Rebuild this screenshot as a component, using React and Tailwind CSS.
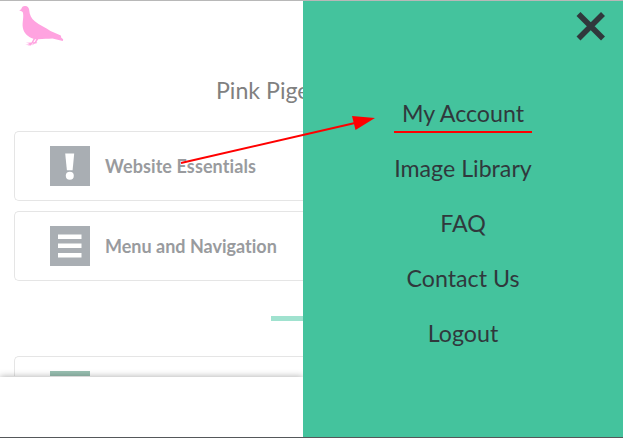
const links = ['My Account', 'Image Library', 'FAQ', 'Contact Us', 'Logout'];

function Pigeon() {
  return (
    <svg className="ml-[19px] mt-[4px] block h-[42px] w-[46px]" viewBox="19 5 46 42" fill="#ffa3e0">
      <path d="M19.2 10.6 L21.2 9.3 C21.6 7 23.3 5.8 25.2 6 C27.7 6.1 29 7.8 29.2 10 C29.5 14.5 31.2 18.4 34.8 21.2 C39.5 25 45.5 27.5 50.5 31 L60.8 35.6 L61.3 37.7 L63.2 39.2 L62.8 41 L52.5 38.6 C48 38.7 43.5 39.2 38.2 39.3 L36.3 42.3 L37.5 43.1 L34.4 43.7 L31.8 45.6 L33.4 43.3 L30.3 43 L34.7 42 L36.3 39.3 L35 39.2 L32.5 43.5 L30.8 45.5 L27.3 45.2 L29.8 44.6 L25.3 44.5 L29.7 43.5 L25.8 42.8 L31.5 42.4 L33.5 38.8 C27.5 36.6 23.8 33 22.9 28 C21.9 22.5 24.3 17 22.7 12.1 L21 11 Z" />
    </svg>
  );
}

function Card({ icon, label, labelClass = '' }) {
  return (
    <div className="flex h-[70px] shrink-0 items-center rounded-l-[5px] border border-r-0 border-[#e5e5e5] pl-[35px]">
      <div className="size-[40px] shrink-0 bg-[#a9aeb3]">{icon}</div>
      <span className={`ml-[15px] whitespace-nowrap text-[18px] font-bold leading-[24px] text-[#999b9e] ${labelClass}`}>{label}</span>
    </div>
  );
}

export default function App() {
  return (
    <div className="relative flex h-[438px] w-[623px] overflow-hidden border-b border-t border-b-[#55585a] border-t-[#b8b8b8] bg-white font-[Lato,sans-serif] [font-variant-ligatures:none]">
      <main className="flex w-[303px] shrink-0 flex-col">
        <div className="h-[375px] shrink-0 overflow-hidden">
          <div className="h-[66px]">
            <Pigeon />
          </div>
          <h1 className="h-[60px] whitespace-nowrap pl-[216px] pt-[3px] text-[23.2px] leading-[32px] text-[#808080]">Pink Pige</h1>
          <div className="flex flex-col gap-[10px] pl-[14px]">
            <Card
              label="Website Essentials"
              labelClass="tracking-[0.1px]"
              icon={
                <svg className="size-[40px]" viewBox="0 0 40 40" fill="#fff">
                  <path d="M15.2 7.5H24.2L22.6 24.2H16.9Z" />
                  <circle cx="19.8" cy="29.7" r="4" />
                </svg>
              }
            />
            <Card
              label="Menu and Navigation"
              icon={
                <svg className="size-[40px]" viewBox="0 0 40 40" fill="#fff">
                  <path d="M8 8.5h23.5v4.500H8zM8 17.500h23.5v4.500H8zM8 27h23.5v4.500H8z" />
                </svg>
              }
            />
          </div>
          <div className="ml-[271px] mt-[35px] h-[5px] bg-[#a0e2cf]" />
          <div className="ml-[14px] mt-[35px] h-[70px] rounded-l-[5px] border border-r-0 border-[#e5e5e5] pl-[35px] pt-[14px]">
            <div className="size-[40px] bg-[#98bfb1]" />
          </div>
        </div>
        <footer className="relative mt-[1px] grow bg-white shadow-[0_0_7px_rgba(0,0,0,0.35)]" />
      </main>
      <nav className="relative flex w-[320px] shrink-0 flex-col bg-[#44c39d]">
        <svg className="ml-[272px] mt-[10px] h-[32px] w-[32px] shrink-0" viewBox="0 0 32 32" stroke="#30383c" strokeWidth="5.6">
          <path d="M3.5 3L28 27.5M28 3L3.5 27.5" />
        </svg>
        <ul className="mt-[43px] flex flex-col text-center text-[23.2px] leading-[55px] text-[#30383c]">
          {links.map((l) => (
            <li key={l} className="h-[55px]">{l}</li>
          ))}
        </ul>
      </nav>
      <svg className="absolute left-0 top-[-1px] h-[438px] w-[623px]" viewBox="0 0 623 438">
        <path d="M181 163L355 123" stroke="#f00" strokeWidth="2" />
        <path d="M375 118L352 116L355.500 130Z" fill="#f00" />
        <path d="M394 132H532" stroke="#f00" strokeWidth="2" />
      </svg>
    </div>
  );
}
